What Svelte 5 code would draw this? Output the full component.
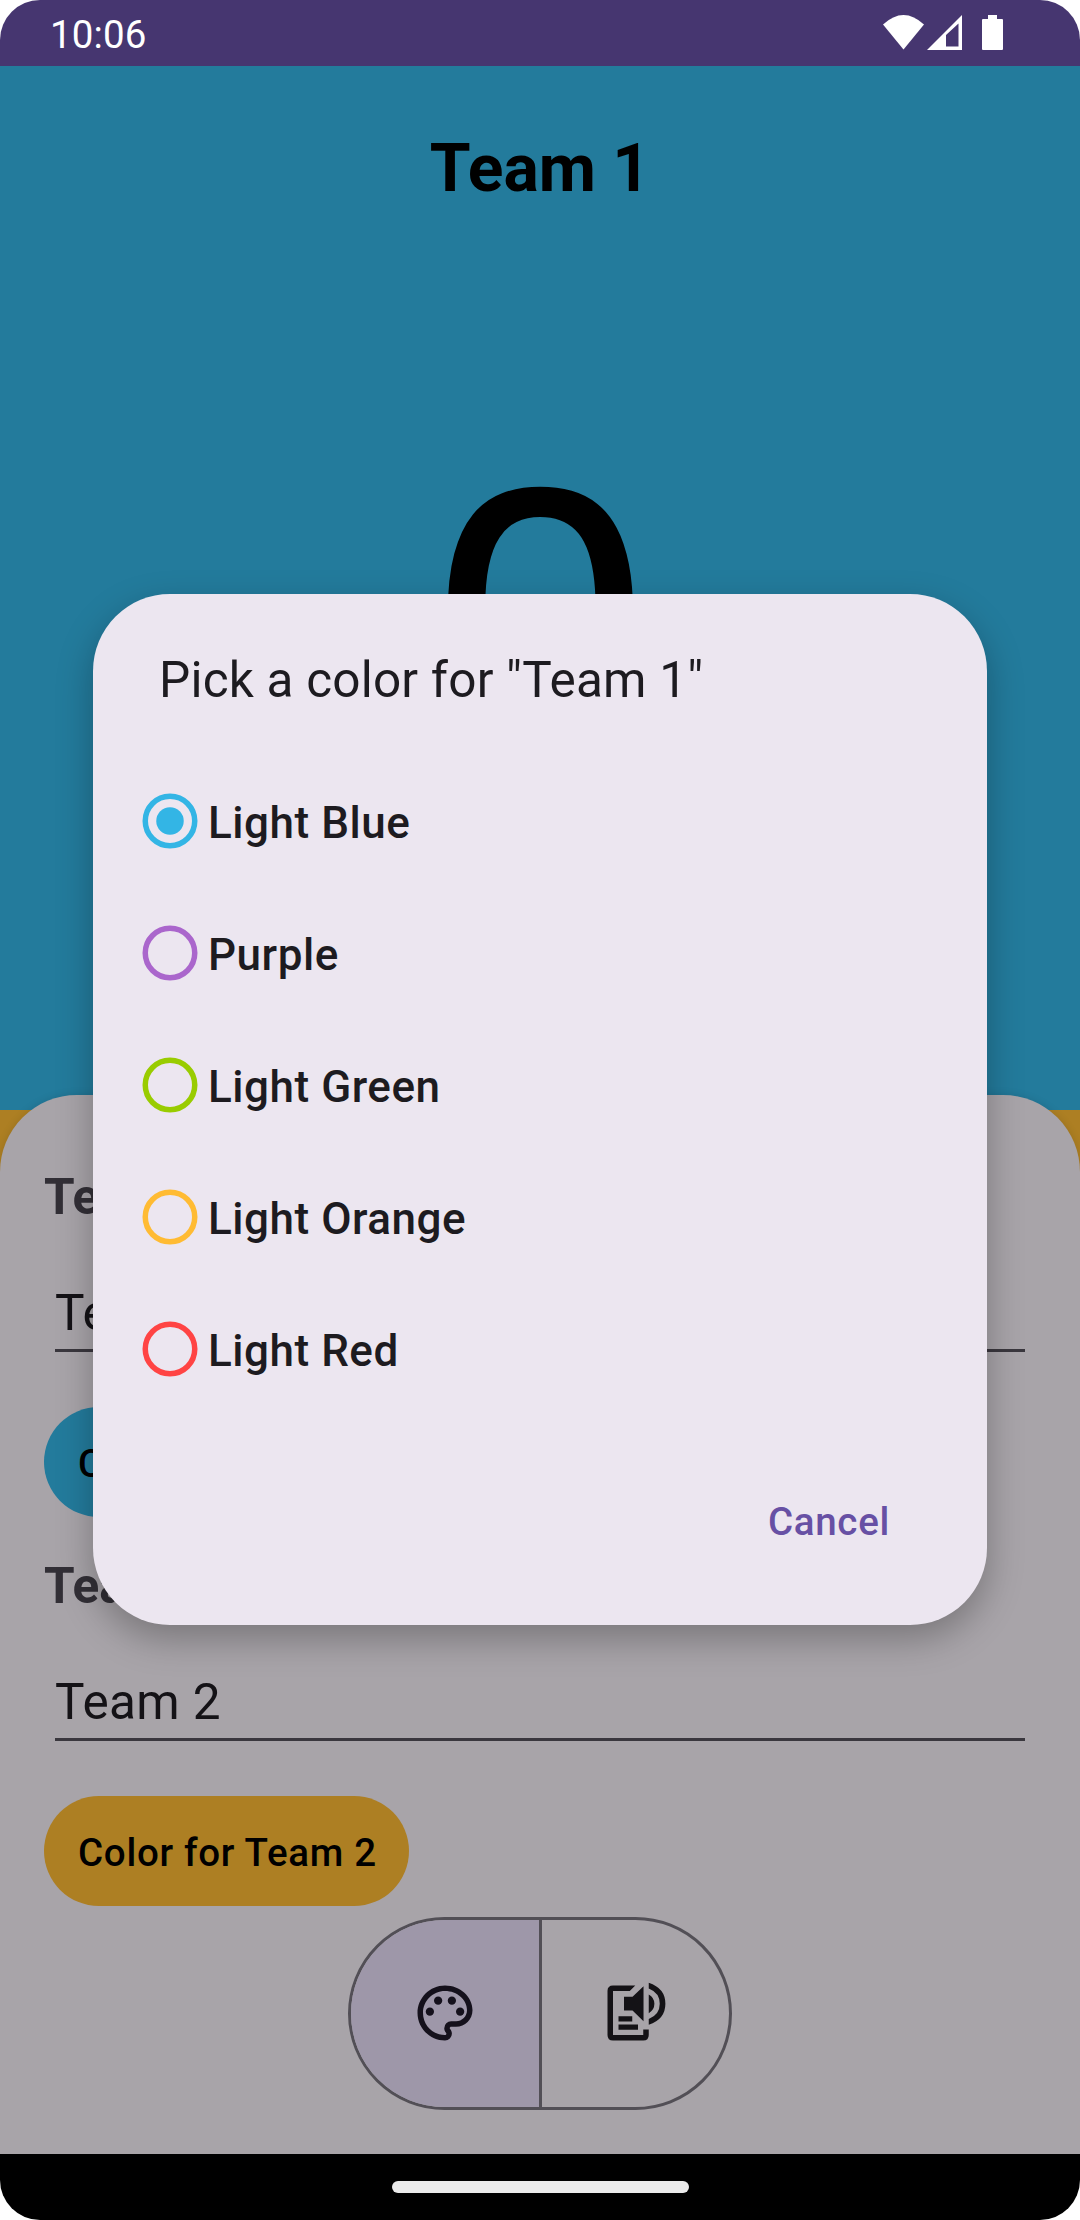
<script>
  const options = [
    { name: 'Light Blue', color: '#33b5e5' },
    { name: 'Purple', color: '#aa66cc' },
    { name: 'Light Green', color: '#99cc00' },
    { name: 'Light Orange', color: '#ffbb33' },
    { name: 'Light Red', color: '#ff4444' }
  ];
  const teams = [
    { name: 'Team 1', tone: 'blue' },
    { name: 'Team 2', tone: 'orange' }
  ];
  let selected = $state('Light Blue');
</script>

<div class="screen">
  <header class="status">
    <span class="time">10:06</span>
    <svg class="tray" viewBox="0 0 122 36" width="122" height="36">
      <path fill="#fff" d="M0 9.5Q20.500 -9.500 41 9.500L20.500 34.500Z" />
      <path fill="#fff" fill-rule="evenodd" d="M44 35L79 0V35ZM63 20V31.500H75.500V8.500Z" />
      <path fill="#fff" d="M105 0h9v4h5q1 0 1 1v29q0 1-1 1h-19q-1 0-1-1v-29q0-1 1-1h5z" />
    </svg>
  </header>

  <main class="board">
    <section class="score">
      <h1>Team 1</h1>
      <div class="points">0</div>
    </section>

    <section class="sheet">
      {#each teams as team}
        <div class="team">
          <h2>{team.name}</h2>
          <div class="field">{team.name}</div>
          <button class="tonal {team.tone}">Color for {team.name}</button>
        </div>
      {/each}
      <div class="toggle">
        <div class="seg active">
          <svg viewBox="0 0 24 24" width="66" height="66" fill="#15111c">
            <path d="M12 22C6.490 22 2 17.510 2 12S6.490 2 12 2s10 4.040 10 9c0 3.310-2.690 6-6 6h-1.770c-.280 0-.500.220-.500.500 0 .120.050.230.130.330.410.470.640 1.060.640 1.670A2.500 2.500 0 0 1 12 22zm0-18c-4.410 0-8 3.590-8 8s3.590 8 8 8c.280 0 .500-.220.500-.500a.540.540 0 0 0-.140-.350c-.410-.460-.630-1.050-.630-1.650a2.500 2.500 0 0 1 2.500-2.500H16c2.210 0 4-1.790 4-4 0-3.860-3.590-7-8-7z" />
            <circle cx="6.500" cy="11.500" r="1.500" /><circle cx="9.500" cy="7.500" r="1.500" />
            <circle cx="14.500" cy="7.500" r="1.500" /><circle cx="17.500" cy="11.500" r="1.500" />
          </svg>
        </div>
        <div class="seg">
          <svg viewBox="0 0 24 24" width="66" height="66" fill="#141216">
            <path d="M12.100 2H4Q2 2 2 4V20Q2 22 4 22H15Q17 22 17 20V18H15V20H4V4H10.100Z" />
            <path d="M6 13.200h5v1.900H6zM6 16.200h7.100v1.900H6zM8 6.100h3.100l4-3.800v12.700l-4-3.900H8z" />
            <path d="M17 5.250Q19.050 6.400 19.050 8.650T17 12.050ZM17 1Q23.050 3 23.050 8.650T17 16.300V14.200Q21 12.600 21 8.650T17 3.100Z" />
          </svg>
        </div>
      </div>
    </section>
  </main>

  <nav class="navbar"><div class="handle"></div></nav>

  <div class="dialog" role="dialog" aria-label="Pick a color">
    <div class="title">Pick a color for "Team 1"</div>
    <div class="options">
      {#each options as o}
        <button class="option" onclick={() => (selected = o.name)}>
          <svg viewBox="0 0 56 56" width="56" height="56">
            <circle cx="28" cy="28" r="24.750" fill="none" stroke={o.color} stroke-width="5.500" />
            {#if selected === o.name}<circle cx="28" cy="28" r="13.750" fill={o.color} />{/if}
          </svg>
          <span>{o.name}</span>
        </button>
      {/each}
    </div>
    <div class="actions"><button class="cancel">Cancel</button></div>
  </div>
</div>

<style>
  :global(body) { background: #fff; }
  .screen {
    position: relative;
    width: 1080px;
    height: 2220px;
    display: flex;
    flex-direction: column;
    overflow: hidden;
    border-radius: 40px;
    font-family: Roboto, "Liberation Sans", sans-serif;
  }
  button { border: 0; background: none; padding: 0; font: inherit; }
  .status {
    height: 66px;
    box-sizing: border-box;
    padding: 2px 75px 0 50px;
    background: #463670;
    color: #fff;
    display: flex;
    align-items: center;
    justify-content: space-between;
  }
  .time { padding-top: 2px; font-size: 38.500px; line-height: 64px; letter-spacing: 0.100px; }
  .tray { display: block; margin-top: -3px; }
  .board {
    flex: 1;
    background: #ad7f23;
    display: flex;
    flex-direction: column;
    position: relative;
  }
  .score {
    height: 1044px;
    box-sizing: border-box;
    padding-top: 63px;
    background: #237b9c;
    color: #000;
    text-align: center;
  }
  h1 { margin: 0; font-size: 66px; line-height: 80px; font-weight: 700; }
  .points { margin-top: 234px; padding-left: 1px; font-size: 412.500px; line-height: 400px; font-weight: 400; }
  .sheet {
    position: absolute;
    left: 0;
    right: 0;
    top: 1029px;
    bottom: 0;
    box-sizing: border-box;
    padding: 73px 44px 0;
    border-radius: 77px 77px 0 0;
    background: #a8a4a9;
    box-shadow: 0 0 8px rgba(0, 0, 0, 0.12);
    display: flex;
    flex-direction: column;
  }
  .team { display: flex; flex-direction: column; align-items: flex-start; height: 389px; }
  h2 { margin: 0; font-size: 49.500px; line-height: 58px; font-weight: 700; color: #322f36; }
  .field {
    align-self: stretch;
    margin: 45px 11px 0;
    padding-top: 6px;
    font-size: 49.500px;
    line-height: 72px;
    letter-spacing: 0.350px;
    color: #141216;
    border-bottom: 3px solid #3a373e;
  }
  .tonal {
    margin-top: 55px;
    height: 110px;
    box-sizing: border-box;
    padding: 2px 32px 0 34px;
    border-radius: 55px;
    font-size: 38.500px;
    font-weight: 500;
    letter-spacing: 0.700px;
    color: #000;
  }
  .blue { background: #237b9c; }
  .orange { background: #ad7f23; }
  .toggle {
    align-self: center;
    margin-top: -29px;
    width: 384px;
    height: 193px;
    box-sizing: border-box;
    border: 3px solid #524f56;
    border-radius: 97px;
    display: flex;
    overflow: hidden;
  }
  .seg { flex: 1; display: flex; align-items: center; justify-content: center; padding-bottom: 2px; }
  .active { background: #9e97a9; border-right: 3px solid #524f56; }
  .navbar { height: 66px; background: #000; display: flex; align-items: center; justify-content: center; }
  .handle { width: 297px; height: 12px; border-radius: 6px; background: #ebebeb; }
  .dialog {
    position: absolute;
    left: 93px;
    top: 594px;
    width: 894px;
    height: 1031px;
    box-sizing: border-box;
    padding: 53px 66px 49px;
    border-radius: 77px;
    background: #ece6f0;
    color: #1d1b20;
    box-shadow: 0 14px 36px rgba(0, 0, 0, 0.28);
    display: flex;
    flex-direction: column;
  }
  .title { font-size: 49.500px; line-height: 66px; letter-spacing: 0.200px; }
  .options { margin: 42px 0 0 -17px; display: flex; flex-direction: column; }
  .option {
    height: 132px;
    display: flex;
    align-items: center;
    gap: 10px;
    font-size: 44px;
    font-weight: 500;
    letter-spacing: 0.530px;
    color: #1d1b20;
  }
  .option span { padding-top: 4px; }
  .actions { margin-top: auto; display: flex; justify-content: flex-end; }
  .cancel {
    height: 110px;
    padding: 0 31px 0 33px;
    font-size: 38.500px;
    font-weight: 500;
    letter-spacing: 0.700px;
    color: #6750a4;
  }
</style>
